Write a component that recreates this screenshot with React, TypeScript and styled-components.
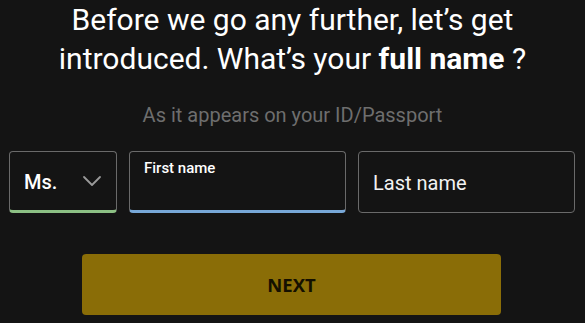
import styled, { createGlobalStyle } from "styled-components"

const Global = createGlobalStyle`
  html, body {
    margin: 0;
    padding: 0;
    background: #141414;
  }
  body {
    font-family: Roboto, "Liberation Sans", sans-serif;
  }
`

const Page = styled.div`
  width: 585px;
  height: 323px;
  overflow: hidden;
  background: #141414;
  display: flex;
  flex-direction: column;
  align-items: center;
`

const Title = styled.h1`
  margin: 0;
  font-size: 30px;
  line-height: 39px;
  font-weight: 400;
  color: #fff;
  text-align: center;
  white-space: nowrap;

  strong {
    font-weight: 700;
  }
`

const Hint = styled.p`
  margin: 25px 0 0;
  font-size: 20px;
  line-height: 24px;
  color: #6e6e6e;
  text-align: center;
`

const Fields = styled.div`
  align-self: stretch;
  display: grid;
  grid-template-columns: 108px 217px 217px;
  gap: 12px;
  padding: 0 10px 0 9px;
  margin-top: 24px;
`

const Field = styled.div<{ $accent?: string }>`
  position: relative;
  height: 62px;
  box-sizing: border-box;
  border: 1px solid #6a6a6a;
  border-bottom: ${p => (p.$accent ? `3px solid ${p.$accent}` : "1px solid #6a6a6a")};
  border-radius: 4px;
  background: #141414;
  display: flex;
  align-items: center;
  padding: 0 14px;
  color: #fff;
`

const SelectValue = styled.span`
  flex: 1;
  font-size: 20px;
  font-weight: 500;
  color: #fff;
  margin-top: 1px;
`

const FloatLabel = styled.span`
  position: absolute;
  top: 7px;
  left: 14px;
  font-size: 15px;
  font-weight: 500;
  color: #fff;
`

const Placeholder = styled.span`
  font-size: 20px;
  color: #f2f2f2;
  margin-top: 2px;
`

const NextBtn = styled.button`
  align-self: flex-start;
  margin: 41px 0 0 82px;
  width: 419px;
  height: 61px;
  border: none;
  border-radius: 4px;
  background: #8a6d07;
  color: #141000;
  font-family: "Open Sans", "Liberation Sans", sans-serif;
  font-size: 18.5px;
  font-weight: 700;
  cursor: pointer;
`

function Chevron() {
  return (
    <svg width="20" height="12" viewBox="0 0 20 12" fill="none">
      <path d="M2 2 L10 10 L18 2" stroke="#9a9a9a" strokeWidth="1.8" strokeLinecap="round" strokeLinejoin="round" />
    </svg>
  )
}

export default function App() {
  return (
    <Page>
      <Global />
      <Title>
        Before we go any further, let’s get
        <br />
        introduced. What’s your <strong>full name</strong> ?
      </Title>
      <Hint>As it appears on your ID/Passport</Hint>
      <Fields>
        <Field $accent="#8cc084">
          <SelectValue>Ms.</SelectValue>
          <Chevron />
        </Field>
        <Field $accent="#78a8d8">
          <FloatLabel>First name</FloatLabel>
        </Field>
        <Field>
          <Placeholder>Last name</Placeholder>
        </Field>
      </Fields>
      <NextBtn>NEXT</NextBtn>
    </Page>
  )
}
